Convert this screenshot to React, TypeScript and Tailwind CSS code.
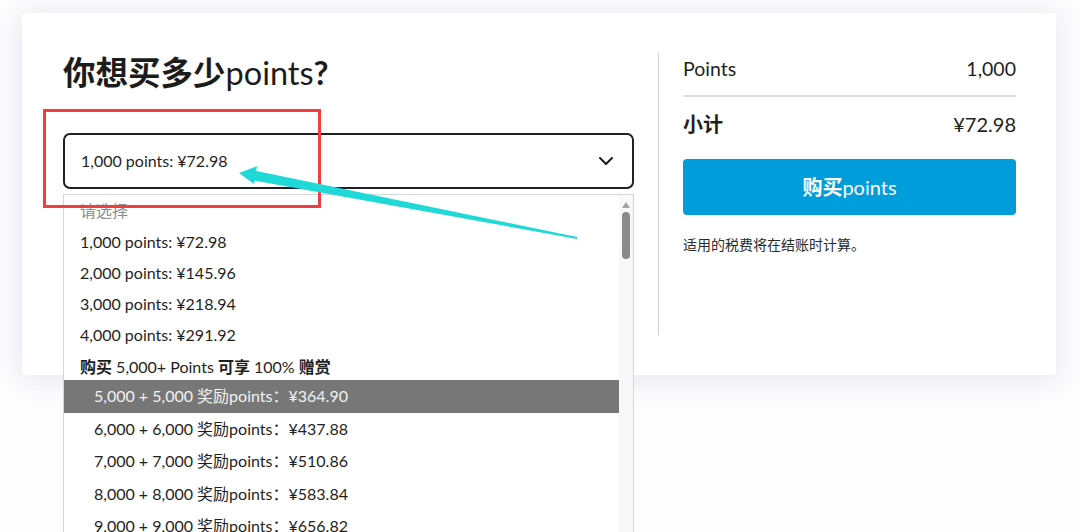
import { ChevronDown } from 'lucide-react'

const latin = "font-['Lato','Noto_Sans_CJK_SC',sans-serif]"

const plainOptions = ['1,000 points: ¥72.98', '2,000 points: ¥145.96', '3,000 points: ¥218.94', '4,000 points: ¥291.92']

const bonusOptions = [
  { n: '5,000', price: '¥364.90' },
  { n: '6,000', price: '¥437.88' },
  { n: '7,000', price: '¥510.86' },
  { n: '8,000', price: '¥583.84' },
  { n: '9,000', price: '¥656.82' },
]

const Scrollbar = () => (
  <div className="flex w-[14px] shrink-0 flex-col items-center bg-[#f8f8f8] pt-[7px]">
    <div className="h-0 w-0 border-x-[4px] border-b-[6px] border-x-transparent border-b-[#a3a3a3]" />
    <div className="mt-[4px] h-[47px] w-[8px] rounded-full bg-[#8a8a8a]" />
  </div>
)

const OptionsList = () => (
  <div className="absolute left-0 top-[calc(100%+5px)] z-10 flex h-[360px] w-full overflow-hidden border border-[#d6d6d6] bg-white">
    <div className="flex-1 text-[16px] text-[#1f1f1f]">
      <div className="flex h-[31px] items-center pl-[16px] text-[#8c8c8c]">请选择</div>
      {plainOptions.map(label => (
        <div key={label} className="flex h-[31px] items-center pl-[16px]">
          {label}
        </div>
      ))}
      <div className="flex h-[30px] items-center pl-[16px] pt-[4px]">
        <b>购买</b>&nbsp;5,000+ Points&nbsp;<b>可享</b>&nbsp;100%&nbsp;<b>赠赏</b>
      </div>
      {bonusOptions.map((o, i) => (
        <div
          key={o.n}
          className={`flex h-[32.5px] items-center pl-[30px] ${i === 0 ? 'bg-[#777777] text-[#f2f2f2]' : ''}`}
        >
          {o.n} + {o.n} 奖励points：{o.price}
        </div>
      ))}
    </div>
    <Scrollbar />
  </div>
)

const Annotation = () => (
  <div className="pointer-events-none absolute inset-0 z-20">
    <div className="absolute left-[43px] top-[109px] h-[99px] w-[278px] border-[3px] border-[#f23d3d]" />
    <svg className="absolute left-0 top-0" width="1080" height="532" viewBox="0 0 1080 532">
      <polygon points="252,170 577,237 577,239 251,180" fill="#1fd8d8" />
      <polygon points="239,173 257,166 254,184" fill="#1fd8d8" />
    </svg>
  </div>
)

export default function App() {
  return (
    <div className={`relative h-[532px] w-[1080px] overflow-hidden bg-[#fdfdfe] pl-[22px] pr-[24px] pt-[13px] ${latin}`}>
      <div className="flex h-[362px] rounded-[4px] bg-white py-[40px] pl-[41px] pr-[40px] shadow-[0_3px_28px_rgba(70,70,130,0.14)]">
        <div className="w-[571px] shrink-0">
          <h1 className="text-[32.5px] leading-[40px] text-[#1c1c1c]">
            <span className="font-bold">你想买多少</span>
            <span>points</span>
            <span className="font-bold">?</span>
          </h1>
          <div className="relative mt-[40px]">
            <div className="flex h-[56px] items-center justify-between rounded-[7px] border-2 border-[#1e2126] pl-[16px] pr-[14px] text-[16px] text-[#1f1f1f]">
              <span>1,000 points: ¥72.98</span>
              <ChevronDown size={24} strokeWidth={2} className="text-[#1a1a1a]" />
            </div>
            <div className="absolute left-0 top-[84px] h-[48px] w-[2px] bg-[#8fd0ec]" />
            <OptionsList />
          </div>
        </div>

        <div className="mx-[24px] w-px self-stretch bg-[#cfcfd4]" />

        <div className="flex-1 text-[#1f1f1f]">
          <div className="flex h-[32px] items-center justify-between text-[19.5px]">
            <span>Points</span>
            <span>1,000</span>
          </div>
          <div className="mt-[10px] h-[2px] bg-[#dcdde0]" />
          <div className="mt-[11px] flex h-[32px] items-center justify-between">
            <span className="text-[20px] font-bold">小计</span>
            <span className="text-[20px]">¥72.98</span>
          </div>
          <button className="mt-[19px] flex h-[56px] w-full items-center justify-center rounded-[4px] bg-[#009ddb] text-[20px] text-white">
            <span className="font-bold">购买</span>
            <span>points</span>
          </button>
          <p className="mt-[20px] text-[14px] leading-[20px] text-[#2a2a2a]">适用的税费将在结账时计算。</p>
        </div>
      </div>
      <Annotation />
    </div>
  )
}
